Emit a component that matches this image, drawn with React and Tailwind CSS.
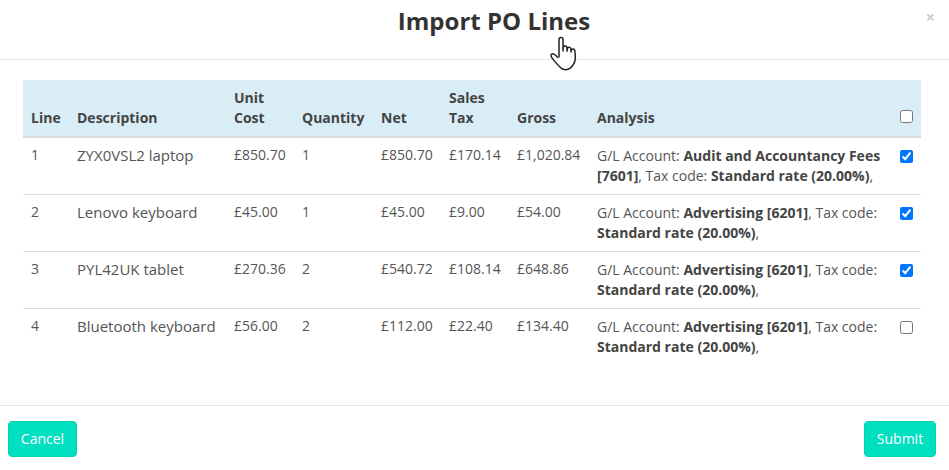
const rows = [
  { line: '1', desc: 'ZYX0VSL2 laptop', unit: '£850.70', qty: '1', net: '£850.70', tax: '£170.14', gross: '£1,020.84', account: 'Audit and Accountancy Fees [7601]', checked: true },
  { line: '2', desc: 'Lenovo keyboard', unit: '£45.00', qty: '1', net: '£45.00', tax: '£9.00', gross: '£54.00', account: 'Advertising [6201]', checked: true },
  { line: '3', desc: 'PYL42UK tablet', unit: '£270.36', qty: '2', net: '£540.72', tax: '£108.14', gross: '£648.86', account: 'Advertising [6201]', checked: true },
  { line: '4', desc: 'Bluetooth keyboard', unit: '£56.00', qty: '2', net: '£112.00', tax: '£22.40', gross: '£134.40', account: 'Advertising [6201]', checked: false },
];

function HandCursor() {
  return (
    <svg className="absolute left-[550px] top-[36px]" width="31" height="36" viewBox="0 0 30 36" fill="#fff" stroke="#222" strokeWidth="1.5" strokeLinejoin="round" strokeLinecap="round">
      <path d="M8.5 21V3.5a2 2 0 0 1 4 0v11.5l.3-3.4a1.8 1.8 0 0 1 3.6.2l.1 3.4.4-2.7a1.8 1.8 0 0 1 3.5.4l.1 3 .5-1.8a1.7 1.7 0 0 1 3.3.5c.4 3.2.8 7.3.2 10.1-.7 3.6-3 6-4.8 7.5-2.2 1.6-5.3 1.8-7.6.8-2.6-1.1-6-5.4-8.4-8.3-1.2-1.4-3.2-3.6-3.2-5.1 0-1.5 1.6-2.2 2.9-1.4 1.1.6 2.8 2.1 3.6 3.2" />
    </svg>
  );
}

export default function App() {
  return (
    <div className="relative w-[949px] h-[470px] bg-white font-['Open_Sans',sans-serif] text-[14px] leading-[20px] text-[#555]">
      {/* Header */}
      <div className="h-[60px] border-b border-[#e5e5e5] flex justify-center pl-[39px]">
        <h1 className="text-[24px] leading-[36px] pt-[3px] font-bold text-[#333]">Import PO Lines</h1>
      </div>
      <span className="absolute right-[14px] top-[7px] text-[#ccc] text-[16px] leading-[20px] font-bold">×</span>
      <HandCursor />

      {/* Table */}
      <div className="px-[23px] pt-[20px] h-[345px]">
        <table className="w-[898px] table-fixed border-collapse">
          <colgroup>
            <col className="w-[46px]" />
            <col className="w-[157px]" />
            <col className="w-[68px]" />
            <col className="w-[79px]" />
            <col className="w-[68px]" />
            <col className="w-[68px]" />
            <col className="w-[80px]" />
            <col className="w-[303px]" />
            <col className="w-[29px]" />
          </colgroup>
          <thead>
            <tr className="bg-[#d9edf7] text-left text-[#444] align-bottom border-b-2 border-[#ddd]">
              <th className="pl-[8px] py-[8px] font-bold">Line</th>
              <th className="pl-[8px] py-[8px] font-bold">Description</th>
              <th className="pl-[8px] py-[8px] font-bold">Unit Cost</th>
              <th className="pl-[8px] py-[8px] font-bold">Quantity</th>
              <th className="pl-[8px] py-[8px] font-bold">Net</th>
              <th className="pl-[8px] py-[8px] font-bold">Sales Tax</th>
              <th className="pl-[8px] py-[8px] font-bold">Gross</th>
              <th className="pl-[8px] py-[8px] font-bold">Analysis</th>
              <th className="pl-[8px] py-[8px] font-bold">
                <input type="checkbox" className="block w-[13px] h-[13px] m-0 mb-[5px]" readOnly />
              </th>
            </tr>
          </thead>
          <tbody>
            {rows.map((row) => (
              <tr key={row.line} className="align-top border-b border-[#ddd] last:border-b-0">
                <td className="pl-[8px] pt-[7px] pb-[9px]">{row.line}</td>
                <td className="pl-[8px] pt-[7px] pb-[9px] text-[15px]">{row.desc}</td>
                <td className="pl-[8px] pt-[7px] pb-[9px]">{row.unit}</td>
                <td className="pl-[8px] pt-[7px] pb-[9px]">{row.qty}</td>
                <td className="pl-[8px] pt-[7px] pb-[9px]">{row.net}</td>
                <td className="pl-[8px] pt-[7px] pb-[9px]">{row.tax}</td>
                <td className="pl-[8px] pt-[7px] pb-[9px]">{row.gross}</td>
                <td className="pl-[8px] pr-[8px] py-[8px]">
                  G/L Account: <b className="font-bold text-[#444]">{row.account}</b>, Tax code: <b className="font-bold text-[#444]">Standard rate (20.00%)</b>,
                </td>
                <td className="pl-[8px] py-[8px]">
                  <input type="checkbox" className="block w-[13px] h-[13px] m-0 mt-[4px] accent-[#0075ff]" defaultChecked={row.checked} />
                </td>
              </tr>
            ))}
          </tbody>
        </table>
      </div>

      {/* Footer */}
      <div className="border-t border-[#e5e5e5] pl-[8px] pr-[13px] pt-[15px] flex justify-between">
        <button className="h-[36px] w-[69px] rounded-[4px] bg-[#00e0c1] border border-[#00d3b6] text-white text-[14px] font-medium">Cancel</button>
        <button className="h-[36px] w-[72px] rounded-[4px] bg-[#00e0c1] border border-[#00d3b6] text-white text-[14px] font-medium">Submit</button>
      </div>
    </div>
  );
}
